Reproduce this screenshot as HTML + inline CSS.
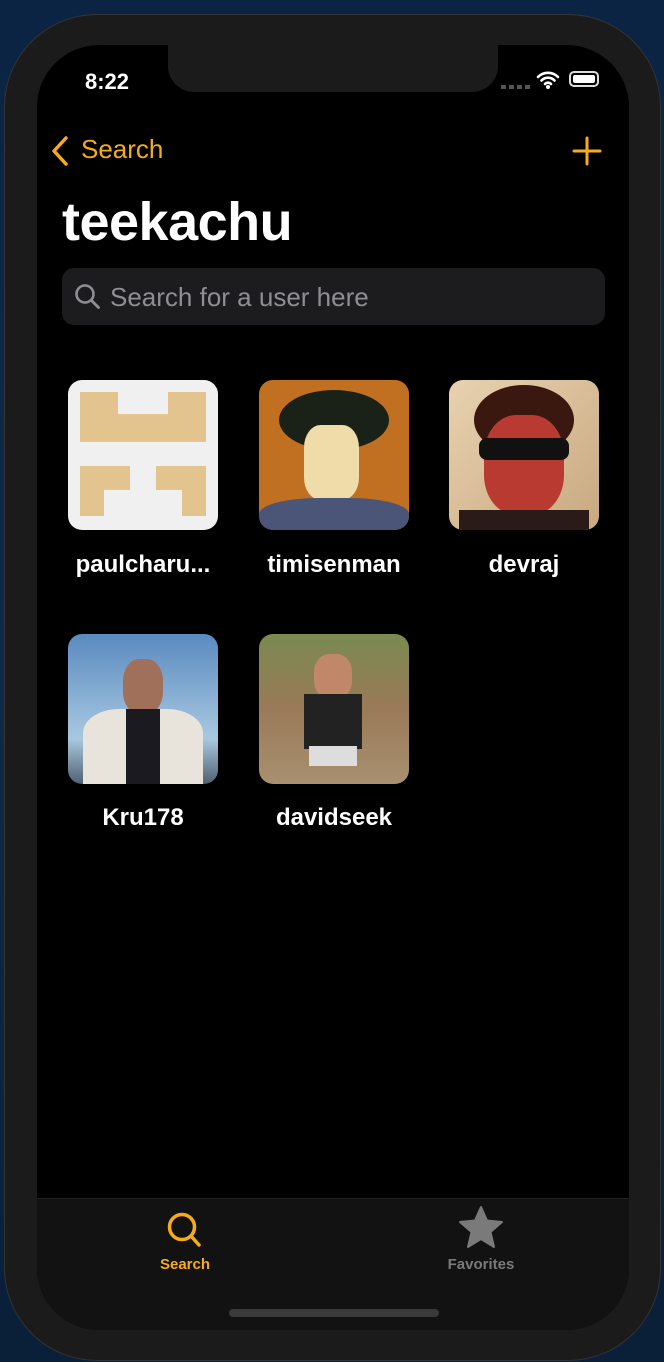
<!DOCTYPE html>
<html><head><meta charset="utf-8"><style>
body{margin:0;width:664px;height:1362px;overflow:hidden;background:linear-gradient(180deg,#0b2444,#0f2a48 50%,#0a1f38);font-family:"Liberation Sans",sans-serif;position:relative}
.frame{position:absolute;left:5px;top:15px;width:655px;height:1345px;background:#1b1b1b;border-radius:92px;box-shadow:0 0 0 1px #333}
.screen{position:absolute;left:37px;top:45px;width:592px;height:1285px;background:#000;border-radius:62px;overflow:hidden}
.notch{position:absolute;left:131px;top:0;width:330px;height:47px;background:#1b1b1b;border-radius:0 0 26px 26px}
.t{position:absolute;color:#fff}
.av{position:absolute;width:150px;height:150px;border-radius:14px;overflow:hidden}
.lbl{position:absolute;width:190px;text-align:center;color:#fff;font-weight:bold;font-size:24px}
.tab{position:absolute;left:0;top:1153px;width:592px;height:132px;background:#121212;border-top:1px solid #222}
</style></head><body>
<div class="frame"></div>
<div class="screen">
<div class="notch"></div>
<div class="t" style="left:48px;top:24px;font-size:22px;font-weight:bold">8:22</div>
<div style="position:absolute;left:464px;top:40px;width:30px;height:4px;background:repeating-linear-gradient(90deg,#555 0 5px,transparent 5px 8px)"></div>
<svg style="position:absolute;left:499px;top:25px" width="24" height="20" viewBox="0 0 24 20"><path d="M2 7a14 14 0 0 1 20 0M5.5 10.5a9 9 0 0 1 13 0M9 14a4 4 0 0 1 6 0" stroke="#fff" stroke-width="2.6" fill="none" stroke-linecap="round"/><circle cx="12" cy="17" r="2" fill="#fff"/></svg>
<div style="position:absolute;left:532px;top:26px;width:30px;height:16px;border:2px solid #ddd;border-radius:5px;box-sizing:border-box;padding:2px"><div style="background:#fff;height:100%;border-radius:2px"></div></div>
<svg style="position:absolute;left:13px;top:90px" width="20" height="32" viewBox="0 0 20 32"><path d="M16 3L4 16l12 13" stroke="#f5ac1a" stroke-width="3.5" fill="none" stroke-linecap="round" stroke-linejoin="round"/></svg>
<div class="t" style="left:44px;top:89px;font-size:26px;color:#f5ac1a">Search</div>
<svg style="position:absolute;left:535px;top:91px" width="30" height="30"><path d="M15 2v26M2 15h26" stroke="#f5ac1a" stroke-width="3" stroke-linecap="round"/></svg>
<div class="t" style="left:25px;top:146px;font-size:54px;font-weight:bold;letter-spacing:-0.5px">teekachu</div>
<div style="position:absolute;left:25px;top:223px;width:543px;height:57px;background:#1c1c1e;border-radius:12px"></div>
<svg style="position:absolute;left:37px;top:238px" width="28" height="28"><circle cx="11" cy="11" r="8.5" stroke="#8e8e93" stroke-width="2.6" fill="none"/><path d="M17.5 17.5l7 7" stroke="#8e8e93" stroke-width="2.8" stroke-linecap="round"/></svg>
<div class="t" style="left:73px;top:237px;font-size:26px;color:#8e8e93">Search for a user here</div>

<div class="av" style="left:31px;top:335px;background:#f0f0f0"><div style="position:absolute;left:12px;top:12px;width:126px;height:50px;background:#e3c38e"></div><div style="position:absolute;left:50px;top:12px;width:50px;height:22px;background:#f0f0f0"></div><div style="position:absolute;left:12px;top:86px;width:50px;height:50px;background:#e3c38e"></div><div style="position:absolute;left:88px;top:86px;width:50px;height:50px;background:#e3c38e"></div><div style="position:absolute;left:36px;top:110px;width:26px;height:26px;background:#f0f0f0"></div><div style="position:absolute;left:88px;top:110px;width:26px;height:26px;background:#f0f0f0"></div></div>
<div class="av" style="left:222px;top:335px;background:#c07020"><div style="position:absolute;left:20px;top:10px;width:110px;height:60px;background:#1a2218;border-radius:50%"></div><div style="position:absolute;left:45px;top:45px;width:55px;height:75px;background:#efdca8;border-radius:30%"></div><div style="position:absolute;left:0;top:118px;width:150px;height:40px;background:#4a5578;border-radius:40% 40% 0 0"></div></div>
<div class="av" style="left:412px;top:335px;background:linear-gradient(135deg,#e8d2b0,#c8a880)"><div style="position:absolute;left:25px;top:5px;width:100px;height:70px;background:#3a1810;border-radius:50%"></div><div style="position:absolute;left:35px;top:35px;width:80px;height:100px;background:#b83a30;border-radius:40%"></div><div style="position:absolute;left:30px;top:58px;width:90px;height:22px;background:#111;border-radius:8px"></div><div style="position:absolute;left:10px;top:130px;width:130px;height:30px;background:#2a1a18"></div></div>
<div class="lbl" style="left:11px;top:506px">paulcharu...</div>
<div class="lbl" style="left:202px;top:506px">timisenman</div>
<div class="lbl" style="left:392px;top:506px">devraj</div>

<div class="av" style="left:31px;top:589px;background:linear-gradient(180deg,#5a8ac0,#a8c8e0 70%,#506070)"><div style="position:absolute;left:55px;top:25px;width:40px;height:55px;background:#a0705a;border-radius:40%"></div><div style="position:absolute;left:15px;top:75px;width:120px;height:80px;background:#e8e4dc;border-radius:30% 30% 0 0"></div><div style="position:absolute;left:58px;top:75px;width:34px;height:80px;background:#1a1a20"></div></div>
<div class="av" style="left:222px;top:589px;background:linear-gradient(180deg,#7a8a50,#9a7a58 50%,#a89070)"><div style="position:absolute;left:55px;top:20px;width:38px;height:45px;background:#c08868;border-radius:40%"></div><div style="position:absolute;left:45px;top:60px;width:58px;height:55px;background:#222"></div><div style="position:absolute;left:50px;top:112px;width:48px;height:20px;background:#ddd"></div></div>
<div class="lbl" style="left:11px;top:759px">Kru178</div>
<div class="lbl" style="left:202px;top:759px">davidseek</div>

<div class="tab">
<svg style="position:absolute;left:127px;top:10px" width="42" height="42"><circle cx="18" cy="18" r="12.5" stroke="#f5ac1a" stroke-width="3.5" fill="none"/><path d="M27 27l8 9" stroke="#f5ac1a" stroke-width="3.5" stroke-linecap="round"/></svg>
<div style="position:absolute;left:108px;top:57px;width:80px;text-align:center;color:#f5ac1a;font-size:15px;font-weight:bold">Search</div>
<svg style="position:absolute;left:421px;top:6px" width="46" height="44" viewBox="0 0 46 44"><path d="M23 2l6 13.5 15 1.5-11.5 10 3.5 15L23 34l-13 8 3.5-15L2 17l15-1.5z" fill="#7a7a7a" stroke="#7a7a7a" stroke-width="2" stroke-linejoin="round"/></svg>
<div style="position:absolute;left:394px;top:57px;width:100px;text-align:center;color:#7a7a7a;font-size:15px;font-weight:bold">Favorites</div>
<div style="position:absolute;left:192px;top:110px;width:210px;height:8px;background:#3a3a3a;border-radius:4px"></div>
</div>
</div>
</body></html>
